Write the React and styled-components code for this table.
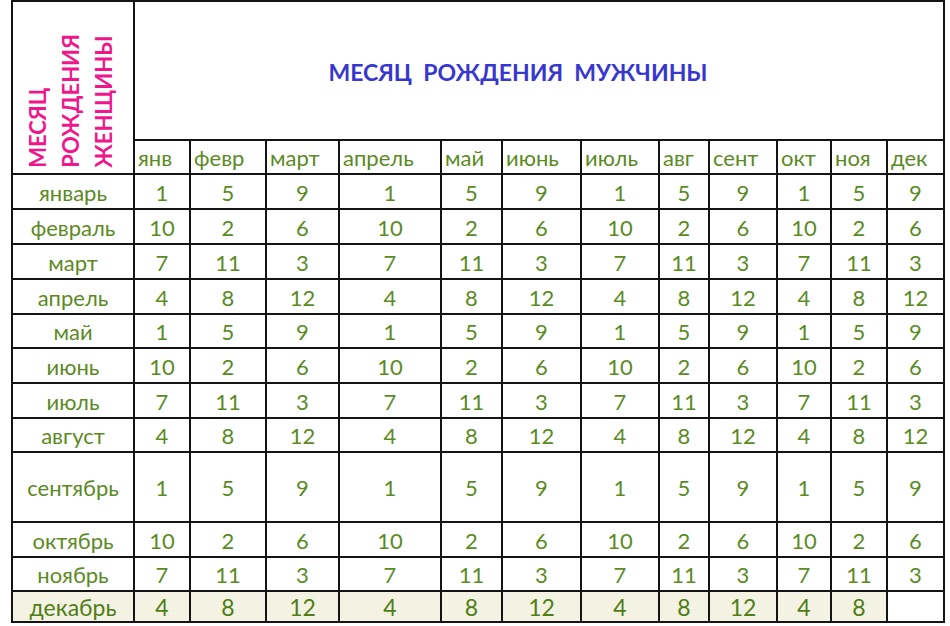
import React from 'react';
import styled, { createGlobalStyle } from 'styled-components';

const GlobalStyle = createGlobalStyle`
  html, body {
    margin: 0;
    padding: 0;
    background: #ffffff;
  }
  body {
    font-family: Lato, 'Open Sans', sans-serif;
  }
`;

const shortMonths = ['янв', 'февр', 'март', 'апрель', 'май', 'июнь', 'июль', 'авг', 'сент', 'окт', 'ноя', 'дек'];

const rows = [
  { name: 'январь', values: [1, 5, 9, 1, 5, 9, 1, 5, 9, 1, 5, 9] },
  { name: 'февраль', values: [10, 2, 6, 10, 2, 6, 10, 2, 6, 10, 2, 6] },
  { name: 'март', values: [7, 11, 3, 7, 11, 3, 7, 11, 3, 7, 11, 3] },
  { name: 'апрель', values: [4, 8, 12, 4, 8, 12, 4, 8, 12, 4, 8, 12] },
  { name: 'май', values: [1, 5, 9, 1, 5, 9, 1, 5, 9, 1, 5, 9] },
  { name: 'июнь', values: [10, 2, 6, 10, 2, 6, 10, 2, 6, 10, 2, 6] },
  { name: 'июль', values: [7, 11, 3, 7, 11, 3, 7, 11, 3, 7, 11, 3] },
  { name: 'август', values: [4, 8, 12, 4, 8, 12, 4, 8, 12, 4, 8, 12] },
  { name: 'сентябрь', values: [1, 5, 9, 1, 5, 9, 1, 5, 9, 1, 5, 9] },
  { name: 'октябрь', values: [10, 2, 6, 10, 2, 6, 10, 2, 6, 10, 2, 6] },
  { name: 'ноябрь', values: [7, 11, 3, 7, 11, 3, 7, 11, 3, 7, 11, 3] },
  { name: 'декабрь', values: [4, 8, 12, 4, 8, 12, 4, 8, 12, 4, 8, ''], last: true },
];

export default function App() {
  return (
    <>
      <GlobalStyle />
      <Sheet>
        <Corner>
          <VerticalLabel>
            МЕСЯЦ
            <br />
            РОЖДЕНИЯ
            <br />
            ЖЕНЩИНЫ
          </VerticalLabel>
        </Corner>
        <Title>МЕСЯЦ  РОЖДЕНИЯ  МУЖЧИНЫ</Title>
        {shortMonths.map((m) => (
          <MonthHead key={m}>{m}</MonthHead>
        ))}
        {rows.map((row) => (
          <React.Fragment key={row.name}>
            <RowName $last={row.last}>{row.name}</RowName>
            {row.values.map((v, i) => (
              <Value key={i} $last={row.last} $empty={v === ''}>
                {v}
              </Value>
            ))}
          </React.Fragment>
        ))}
      </Sheet>
    </>
  );
}

const Sheet = styled.div`
  margin-left: 11px;
  width: max-content;
  display: grid;
  grid-template-columns: 120px 54px 74px 71px 100px 59px 77px 76px 48px 66px 52px 54px 55px;
  grid-template-rows: 137px 32px 33px 33px 33px 33px 32px 33px 33px 32px 68px 33px 32px 29px;
  gap: 2px;
  padding: 2px;
  background: #141414;
`;

const Cell = styled.div`
  background: #ffffff;
  color: #5b8a1f;
  font-size: 22px;
  line-height: 1;
  display: flex;
  align-items: center;
  overflow: hidden;
  white-space: nowrap;
`;

const Corner = styled(Cell)`
  grid-row: 1 / 3;
  align-items: flex-end;
  padding: 0 0 5px 8px;
`;

const VerticalLabel = styled.div`
  writing-mode: vertical-rl;
  transform: rotate(180deg);
  color: #f0168c;
  font-weight: 700;
  font-size: 22px;
  line-height: 33px;
`;

const Title = styled(Cell)`
  grid-column: 2 / -1;
  justify-content: center;
  padding: 4px 42px 0 0;
  color: #3737cf;
  font-weight: 700;
  font-size: 23px;
  white-space: pre;
`;

const MonthHead = styled(Cell)`
  padding: 2px 0 0 3px;
`;

const RowName = styled(Cell)`
  justify-content: center;
  padding-top: 2px;
  background: ${({ $last }) => ($last ? '#f4f2e3' : '#ffffff')};
  color: ${({ $last }) => ($last ? '#4f7d16' : '#5b8a1f')};
  font-size: ${({ $last }) => ($last ? '23px' : '22px')};
`;

const Value = styled(Cell)`
  justify-content: center;
  padding-top: 2px;
  background: ${({ $last, $empty }) => ($last && !$empty ? '#f4f2e3' : '#ffffff')};
  color: ${({ $last }) => ($last ? '#4f7d16' : '#5b8a1f')};
  font-size: ${({ $last }) => ($last ? '23px' : '22px')};
`;
